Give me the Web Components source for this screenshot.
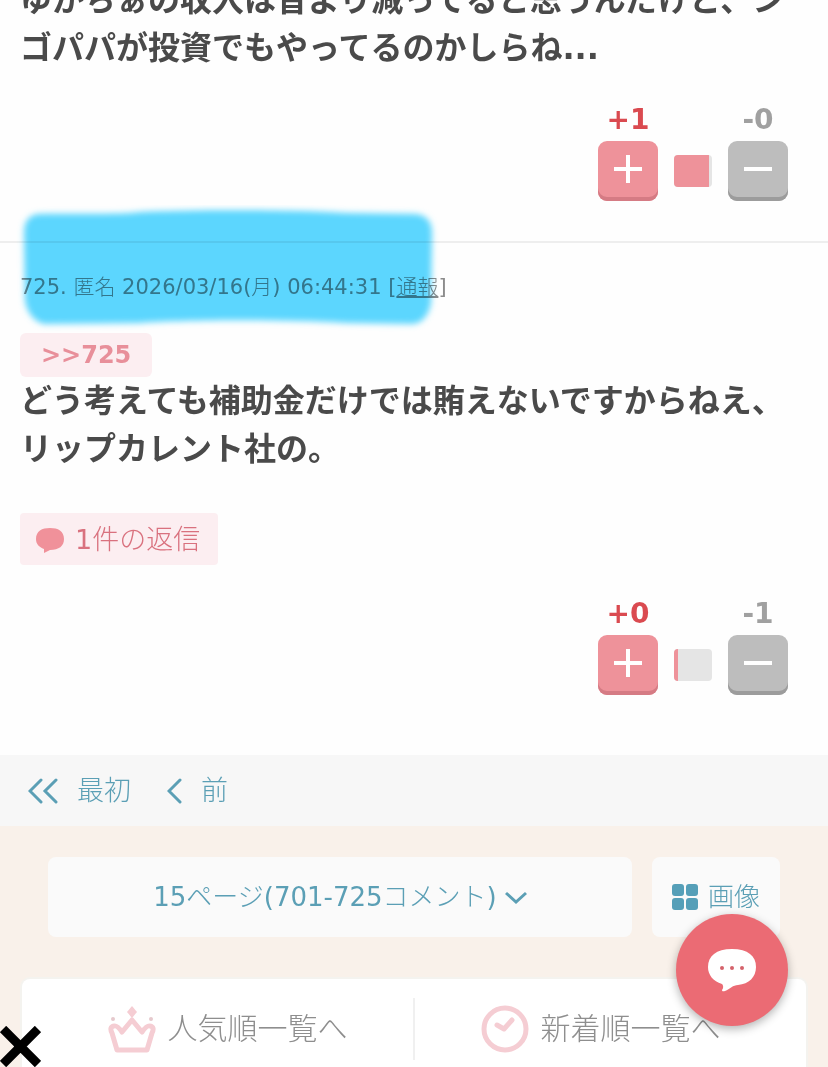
<!DOCTYPE html>
<html lang="ja">
<head>
<meta charset="utf-8">
<meta name="viewport" content="width=device-width, initial-scale=1">
<title>コメント一覧</title>
<style>
  html { overflow: hidden; }
  body {
    --light: "DejaVu Sans", "Noto Sans CJK JP Light", "Noto Sans CJK JP", sans-serif;
    margin: 0;
    background: #fefefe;
    color: #4a4a4a;
    font-family: "DejaVu Sans", "Noto Sans CJK JP", sans-serif;
  }
</style>
</head>
<body>
<topic-page>
  <comment-item plus="1" minus="0" rate="92">
    ゆかちぁの収入は昔より減ってると思うんだけど、ンゴパパが投資でもやってるのかしらね...
  </comment-item>
  <comment-item plus="0" minus="1" rate="10" number="725" name="匿名" date="2026/03/16(月) 06:44:31" anchor="725" replies="1" marked>
    どう考えても補助金だけでは賄えないですからねえ、<br>リップカレント社の。
  </comment-item>
  <page-nav slot="nav"></page-nav>
  <page-select slot="footer" label="15ページ(701-725コメント)"></page-select>
  <sort-tabs slot="footer"></sort-tabs>
</topic-page>
<float-comment></float-comment>
<close-mark></close-mark>

<script>
class TopicPage extends HTMLElement {
  constructor() {
    super();
    this.attachShadow({ mode: "open" });
    this.shadowRoot.innerHTML = `
      <style>
        :host { display: block; margin-top: -24px; }
        footer { background: #f9f1ea; padding: 31px 22px 0; }
      </style>
      <main><slot></slot></main>
      <slot name="nav"></slot>
      <footer><slot name="footer"></slot></footer>
    `;
  }
}

class VoteBox extends HTMLElement {
  constructor() {
    super();
    this.attachShadow({ mode: "open" });
  }

  connectedCallback() {
    const plus = this.getAttribute("plus");
    const minus = this.getAttribute("minus");
    const rate = this.getAttribute("rate");
    this.shadowRoot.innerHTML = `
      <style>
        :host { display: flex; justify-content: flex-end; align-items: flex-end; gap: 16px; }
        .side { width: 60px; text-align: center; }
        .count { display: block; font-size: 28px; line-height: 36px; margin-bottom: 3px; font-weight: bold; }
        .plus .count { color: #da4a50; }
        .minus .count { color: #a0a0a0; }
        button {
          display: flex; align-items: center; justify-content: center;
          width: 60px; height: 60px; padding: 0 0 4px; border: 0; border-radius: 9px;
          background: #bdbdbd; box-shadow: inset 0 -4px #9c9c9c;
        }
        .plus button { background: #ee929a; box-shadow: inset 0 -4px #d57b84; }
        svg { display: block; }
        .bar { width: 38px; height: 32px; margin-bottom: 14px; border-radius: 4px; overflow: hidden; background: #e5e5e5; }
        .fill { height: 100%; background: #ee929a; }
      </style>
      <div class="side plus">
        <span class="count">+${plus}</span>
        <button type="button" aria-label="プラス"><svg width="28" height="28"><path d="M14 0v28M0 14h28" stroke="#fff" stroke-width="4"/></svg></button>
      </div>
      <div class="bar"><div class="fill" style="width:${rate}%"></div></div>
      <div class="side minus">
        <span class="count">-${minus}</span>
        <button type="button" aria-label="マイナス"><svg width="28" height="28"><path d="M0 14h28" stroke="#fff" stroke-width="4"/></svg></button>
      </div>
    `;
  }
}

class CommentItem extends HTMLElement {
  constructor() {
    super();
    this.attachShadow({ mode: "open" });
  }

  connectedCallback() {
    const number = this.getAttribute("number");
    const anchor = this.getAttribute("anchor");
    const replies = this.getAttribute("replies");

    this.shadowRoot.innerHTML = `
      <style>
        :host { display: block; position: relative; padding: 0 40px 40px 20px; }
        :host([number]) { padding: 32px 40px 60px 20px; border-top: 2px solid #eeeeee; }
        .info { margin: 0 0 34px; font-family: var(--light); font-size: 21px; line-height: 24px; color: #8c8c8c; white-space: nowrap; }
        .info a { color: inherit; }
        .anchor {
          display: block; width: fit-content; padding: 0 21px;
          border-radius: 6px; background: #fceef1; color: #e88f9a;
          font-size: 24px; line-height: 44px; font-weight: bold; text-decoration: none;
        }
        .text { margin: 0 -28px 30px 0; font-size: 32px; line-height: 48px; font-weight: bold; }
        .replies {
          display: flex; align-items: center; gap: 11px;
          height: 52px; margin: 40px 0 31px; padding: 2px 18px 0 16px; border: 0; border-radius: 4px;
          background: #fceef1; color: #d9717e; font: 27px/50px var(--light);
        }
        .marker { position: absolute; left: 16px; top: -38px; pointer-events: none; mix-blend-mode: multiply; }
      </style>
      ${number ? `<p class="info">${number}. ${this.getAttribute("name")} ${this.getAttribute("date")} [<a href="#report">通報</a>]</p>` : ""}
      ${anchor ? `<a class="anchor" href="#comment${anchor}">&gt;&gt;${anchor}</a>` : ""}
      <p class="text"><slot></slot></p>
      ${replies ? `<button class="replies" type="button">
        <svg width="28" height="26" viewBox="0 0 28 26"><path d="M14 1C6 1 0 4 0 12c0 5 3 8 8 10v4l6-3c9 0 14-4 14-11C28 4 22 1 14 1z" fill="#f0919a"/></svg>
        <span>${replies}件の返信</span></button>` : ""}
      <vote-box plus="${this.getAttribute("plus")}" minus="${this.getAttribute("minus")}" rate="${this.getAttribute("rate")}"></vote-box>
      ${this.hasAttribute("marked") ? `<svg class="marker" width="426" height="128" viewBox="0 0 426 128">
        <defs><filter id="soft"><feGaussianBlur stdDeviation="3"/></filter></defs>
        <path filter="url(#soft)" fill="#5cd7ff" d="M22 9C60 8 100 10 124 7C190 4 290 5 330 8L400 9Q416 11 416 28L415 98Q411 118 396 119L330 118C260 114 170 115 124 118L28 119Q13 115 9 96L8 28Q8 11 22 9z"/>
      </svg>` : ""}
    `;
  }
}

class PageNav extends HTMLElement {
  constructor() {
    super();
    this.attachShadow({ mode: "open" });
    this.shadowRoot.innerHTML = `
      <style>
        :host { display: block; background: #f7f7f7; }
        nav { display: flex; align-items: center; gap: 36px; height: 71px; padding: 0 28px; }
        a { display: flex; align-items: center; gap: 19px; color: #5b9fb5; font-family: var(--light); font-size: 27px; line-height: 40px; text-decoration: none; }
        path { fill: none; stroke: #5b9fb5; stroke-width: 3; stroke-linecap: round; }
      </style>
      <nav>
        <a href="#first"><svg width="30" height="26"><path d="M13 2L2 13l11 11M28 2L17 13l11 11"/></svg>最初</a>
        <a href="#prev"><svg width="15" height="26"><path d="M13 2L2 13l11 11"/></svg>前</a>
      </nav>
    `;
  }
}

class PageSelect extends HTMLElement {
  constructor() {
    super();
    this.attachShadow({ mode: "open" });
  }

  connectedCallback() {
    this.shadowRoot.innerHTML = `
      <style>
        :host { display: flex; gap: 20px; margin: 0 26px 42px; }
        button, a {
          display: flex; align-items: center; justify-content: center; height: 80px;
          border: 0; border-radius: 8px; background: #fafafa; color: #5b9fb5;
          font: 26px/40px var(--light); text-decoration: none;
        }
        button { flex: 1; gap: 8px; padding: 0; }
        a { width: 128px; gap: 10px; }
      </style>
      <button type="button">${this.getAttribute("label")}<svg width="22" height="16"><path d="M1 4l10 9 10-9" fill="none" stroke="#5b9fb5" stroke-width="3"/></svg></button>
      <a href="#images"><svg width="26" height="26" fill="#559fb8"><rect width="12" height="12" rx="3"/><rect x="14" width="12" height="12" rx="3"/><rect y="14" width="12" height="12" rx="3"/><rect x="14" y="14" width="12" height="12" rx="3"/></svg>画像</a>
    `;
  }
}

class SortTabs extends HTMLElement {
  constructor() {
    super();
    this.attachShadow({ mode: "open" });
    this.shadowRoot.innerHTML = `
      <style>
        :host { display: flex; align-items: center; height: 100px; border-radius: 8px 8px 0 0; background: #fff; box-shadow: 0 0 0 2px #f4f3ef; }
        a {
          flex: 1; display: flex; align-items: center; justify-content: center; gap: 12px; height: 62px;
          padding-left: 20px; color: #8e8e8e; font-family: var(--light); font-size: 30px; line-height: 40px; text-decoration: none;
        }
        a + a { padding: 0 20px 0 0; border-left: 2px solid #f0f0f0; }
        svg { fill: none; stroke: #f5cdd3; stroke-width: 5; stroke-linejoin: round; stroke-linecap: round; }
      </style>
      <a href="#popular">
        <svg width="48" height="48">
          <path d="M9 45L4 28Q1 22 6 21Q9 20 14 27L24 15L34 27Q39 20 42 21Q47 22 44 28L39 45z"/>
          <path d="M24 1l5 6-5 6-5-6z" fill="#f5cdd3" stroke="none"/>
          <circle cx="5" cy="14" r="2" fill="#e6c9cd" stroke="none"/><circle cx="43" cy="14" r="2" fill="#e6c9cd" stroke="none"/>
        </svg>人気順一覧へ</a>
      <a href="#new">
        <svg width="48" height="48"><circle cx="24" cy="24" r="21"/><path d="M16 20l7 4 8-9"/></svg>新着順一覧へ</a>
    `;
  }
}

class FloatComment extends HTMLElement {
  constructor() {
    super();
    this.attachShadow({ mode: "open" });
    this.shadowRoot.innerHTML = `
      <style>
        :host { position: fixed; right: 40px; bottom: 41px; }
        button {
          display: flex; align-items: center; justify-content: center;
          width: 112px; height: 112px; padding: 0; border: 0; border-radius: 50%;
          background: #eb6b74; box-shadow: 0 3px 10px rgba(0, 0, 0, .3);
        }
      </style>
      <button type="button" aria-label="コメントする">
        <svg width="48" height="44" viewBox="0 0 48 44"><path d="M24 1C8 1 0 8 0 19c0 8 5 14 14 17 2 2 1 5 0 6 0 2 2 1 3 1 5-2 8-6 13-6 11-1 18-8 18-18C48 8 40 1 24 1z" fill="#fff"/><g fill="#d5626b"><circle cx="14" cy="20" r="2"/><circle cx="24" cy="20" r="2"/><circle cx="34" cy="20" r="2"/></g></svg>
      </button>
    `;
  }
}

class CloseMark extends HTMLElement {
  constructor() {
    super();
    this.attachShadow({ mode: "open" });
    this.shadowRoot.innerHTML = `
      <style>
        :host { position: fixed; left: 0; bottom: 0; }
        button { display: block; padding: 0; border: 0; background: none; }
        svg { display: block; }
      </style>
      <button type="button" aria-label="閉じる"><svg width="41" height="41"><path d="M3 3l35 35M38 3L3 38" stroke="#000" stroke-width="9"/></svg></button>
    `;
  }
}

customElements.define("vote-box", VoteBox);
customElements.define("comment-item", CommentItem);
customElements.define("page-nav", PageNav);
customElements.define("page-select", PageSelect);
customElements.define("sort-tabs", SortTabs);
customElements.define("float-comment", FloatComment);
customElements.define("close-mark", CloseMark);
customElements.define("topic-page", TopicPage);
</script>
</body>
</html>
